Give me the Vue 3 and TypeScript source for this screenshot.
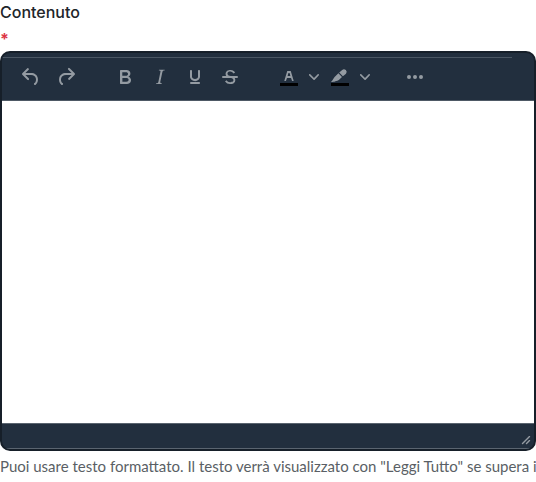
<script setup lang="ts">
import { ref } from 'vue'

interface Tool {
  name: string
  paths: string[]
  bar?: boolean
}

const bar = 'M3 18h18v3H3z'

const groups: Tool[][] = [
  [
    {
      name: 'Annulla',
      paths: ['M6.4 8H12c3.7 0 6.2 2 6.8 5.1.6 2.7-.4 5.6-2.3 6.8a1 1 0 0 1-1-1.8c1.1-.6 1.8-2.7 1.4-4.6-.5-2.1-2.1-3.5-4.9-3.5H6.4l3.3 3.3a1 1 0 1 1-1.4 1.4l-5-5a1 1 0 0 1 0-1.4l5-5a1 1 0 0 1 1.4 1.4L6.4 8Z'],
    },
    {
      name: 'Ripeti',
      paths: ['M17.6 10H12c-2.8 0-4.4 1.4-4.9 3.5-.4 2 .3 4 1.4 4.6a1 1 0 1 1-1 1.8c-2-1.2-2.9-4.1-2.3-6.8.6-3 3-5.1 6.8-5.1h5.6l-3.3-3.3a1 1 0 1 1 1.4-1.4l5 5a1 1 0 0 1 0 1.4l-5 5a1 1 0 0 1-1.4-1.4l3.3-3.3Z'],
    },
  ],
  [
    {
      name: 'Grassetto',
      paths: ['M7.8 19c-.3 0-.5 0-.6-.2l-.2-.5V5.7c0-.2 0-.4.2-.5l.6-.2h5c1.5 0 2.7.3 3.5 1 .7.6 1.1 1.4 1.1 2.5a3 3 0 0 1-.6 1.9c-.4.6-1 1-1.6 1.2.4.1.9.3 1.3.6s.8.7 1 1.2c.4.4.5 1 .5 1.6 0 1.3-.4 2.3-1.3 3-.8.7-2.1 1-3.8 1H7.8Zm5-8.3c.6 0 1.2-.1 1.6-.5.4-.3.6-.7.6-1.3 0-1.1-.8-1.7-2.3-1.7H9.3v3.5h3.4Zm.5 6c.7 0 1.3-.1 1.7-.4.4-.4.6-.9.6-1.5s-.2-1-.7-1.4c-.4-.3-1-.4-2-.4H9.4v3.8h4Z'],
    },
    {
      name: 'Corsivo',
      paths: ['m16.7 4.7-.1.9h-.3c-.6 0-1 0-1.4.3-.3.3-.4.6-.5 1.1l-2.1 9.8v.6c0 .5.4.8 1.4.8h.2l-.2.8H8l.2-.8h.2c1.1 0 1.8-.5 2-1.5l2-9.8.1-.5c0-.6-.4-.8-1.4-.8h-.3l.2-.9h5.8Z'],
    },
    {
      name: 'Sottolineato',
      paths: ['M16 5c.6 0 1 .4 1 1v5.5a4 4 0 0 1-.4 1.8l-1 1.4a5.3 5.3 0 0 1-5.5 1 5 5 0 0 1-1.6-1c-.5-.4-.8-.9-1.1-1.4a4 4 0 0 1-.4-1.8V6c0-.6.4-1 1-1s1 .4 1 1v5.5c0 .3 0 .6.2 1l.6.7a3.3 3.3 0 0 0 2.2.8 3.4 3.4 0 0 0 2.2-.8c.3-.2.4-.5.6-.8l.2-.9V6c0-.6.4-1 1-1ZM8 17h8c.6 0 1 .4 1 1s-.4 1-1 1H8a1 1 0 0 1 0-2Z'],
    },
    {
      name: 'Barrato',
      paths: [
        'M15.6 8.5c-.5-.7-1-1.1-1.3-1.3-.6-.4-1.3-.6-2-.6-2.7 0-2.8 1.7-2.8 2.1 0 1.6 1.8 2 3.2 2.3 4.4.9 4.6 2.8 4.6 3.9 0 1.4-.7 4.1-5 4.1A6.2 6.2 0 0 1 7 16.4l1.5-1.1c.4.6 1.6 2 3.7 2 1.6 0 2.5-.4 3-1.2.4-.8.3-2-.8-2.6-.7-.4-1.6-.7-2.9-1-1-.2-3.9-.8-3.9-3.6C7.6 6 10.3 5 12.4 5c2.9 0 4.2 1.6 4.7 2.4l-1.5 1.1Z',
        'M5 11h14a1 1 0 0 1 0 2H5a1 1 0 0 1 0-2Z',
      ],
    },
  ],
  [
    {
      name: 'Colore testo',
      bar: true,
      paths: ['M8.7 16h-.8a.5.5 0 0 1-.5-.6l2.7-9c.1-.3.3-.4.5-.4h2.8c.2 0 .4.1.5.4l2.7 9a.5.5 0 0 1-.5.6h-.8a.5.5 0 0 1-.4-.4l-.7-2.2c0-.3-.3-.4-.5-.4h-3.4c-.2 0-.4.1-.5.4l-.7 2.2c0 .3-.2.4-.4.4Zm2.6-7.6-.6 2a.5.5 0 0 0 .5.6h1.6a.5.5 0 0 0 .5-.6l-.6-2c0-.3-.3-.4-.5-.4h-.4c-.2 0-.4.1-.5.4Z'],
    },
    {
      name: 'Colore sfondo',
      bar: true,
      paths: [
        'M3 16.9C4.8 15.5 5.2 13.6 6.6 12.1L10.4 8.3 14 11.9 11.4 14.5C10 16 8.6 15.6 7.4 16.2 6 16.9 4.5 16.9 3 16.9Z',
        'M11.2 7.5 14.2 4.9A2.7 2.7 0 0 1 18 8.7L14.9 11.2Z',
      ],
    },
  ],
  [
    {
      name: 'Altro',
      paths: ['M6 10a2 2 0 1 0 0 4 2 2 0 0 0 0-4Zm6 0a2 2 0 1 0 0 4 2 2 0 0 0 0-4Zm6 0a2 2 0 1 0 0 4 2 2 0 0 0 0-4Z'],
    },
  ],
]

const content = ref('')
</script>

<template>
  <div class="field">
    <label class="label" for="contenuto">Contenuto</label>
    <span class="required">*</span>
    <div class="editor">
      <div class="toolbar" role="toolbar">
        <div v-for="(group, i) in groups" :key="i" class="group">
          <div v-for="tool in group" :key="tool.name" class="tool">
            <button type="button" class="button" :aria-label="tool.name">
              <svg width="24" height="24" viewBox="0 0 24 24">
                <path v-if="tool.bar" class="swatch" :d="bar" />
                <path v-for="d in tool.paths" :key="d" :d="d" fill-rule="evenodd" />
              </svg>
            </button>
            <button v-if="tool.bar" type="button" class="chevron" :aria-label="tool.name + ' menu'">
              <svg width="10" height="10" viewBox="0 0 10 10">
                <path d="M8.7 2.2c.3-.3.8-.3 1 0 .4.4.4.9 0 1.2L5.7 7.8c-.3.3-.9.3-1.2 0L.2 3.4a.8.8 0 0 1 0-1.2c.3-.3.8-.3 1.1 0L5 6l3.7-3.8Z" />
              </svg>
            </button>
          </div>
        </div>
      </div>
      <textarea id="contenuto" v-model="content" class="content"></textarea>
      <div class="status">
        <svg width="10" height="10" viewBox="0 0 10 10">
          <path d="M8.1 1.1A.5.5 0 1 1 9 2l-7 7A.5.5 0 1 1 1 8l7-7ZM8.1 5.1A.5.5 0 1 1 9 6l-3 3A.5.5 0 1 1 5 8l3-3Z" />
        </svg>
      </div>
    </div>
    <p class="help">Puoi usare testo formattato. Il testo verrà visualizzato con "Leggi Tutto" se supera i</p>
  </div>
</template>

<style>
body {
  background: #fff;
}
</style>

<style scoped>
.field {
  display: flex;
  flex-direction: column;
  overflow: hidden;
  font-family: Inter, "Liberation Sans", sans-serif;
}

.label {
  font-size: 16px;
  line-height: 24px;
  font-weight: 500;
  color: #212529;
}

.required {
  padding-top: 4px;
  font-size: 16px;
  line-height: 22px;
  font-weight: 700;
  color: #dc3545;
}

.editor {
  display: flex;
  flex-direction: column;
  box-sizing: border-box;
  margin-top: 1px;
  border: 2px solid #161f29;
  border-radius: 10px;
  background: #222f3e;
  overflow: hidden;
}

.toolbar {
  display: flex;
  gap: 25px;
  margin-top: 4px;
  padding: 3px 12px 6px;
  border-bottom: 1px solid #4e5965;
  background: linear-gradient(#4a5663, #4a5663) 0 0 / calc(100% - 22px) 1px no-repeat;
}

.group {
  display: flex;
  gap: 1px;
}

.tool {
  display: flex;
}

.button,
.chevron {
  display: flex;
  align-items: center;
  justify-content: center;
  width: 34px;
  height: 34px;
  padding: 0;
  border: 0;
  background: none;
}

.chevron {
  width: 16px;
}

svg {
  display: block;
  fill: #949ba2;
}

.swatch {
  fill: #000;
}

.content {
  display: block;
  box-sizing: border-box;
  height: 322px;
  padding: 16px;
  border: 0;
  outline: 0;
  background: #fff;
  font: inherit;
  resize: none;
}

.status {
  display: flex;
  align-items: flex-end;
  justify-content: flex-end;
  height: 21px;
  padding: 0 3px 3px 8px;
  border-top: 1px solid #5a646f;
  border-bottom: 1px solid #5a646f;
}

.help {
  margin: 3px 0 0;
  font-family: Lato, "Liberation Sans", sans-serif;
  font-size: 15px;
  line-height: 24px;
  color: #5a5f65;
  white-space: nowrap;
}
</style>
